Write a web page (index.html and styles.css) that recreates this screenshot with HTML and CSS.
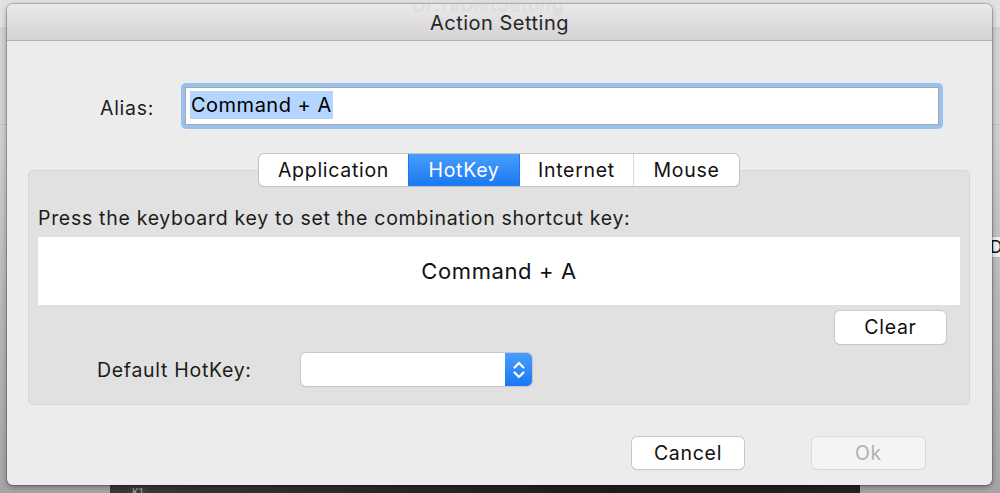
FILE: index.html
```html
<!DOCTYPE html>
<html>
<head>
<meta charset="utf-8">
<link rel="stylesheet" href="styles.css">
</head>
<body>
<div class="desk">
  <div class="back-top"></div>
  <div class="back-btn">Do</div>
  <div class="back-bottom"><span class="back-k">K1</span></div>

  <div class="dialog">
    <div class="titlebar">
      <span class="ghost">Dr.TabletSetting</span>
      <span class="title">Action Setting</span>
    </div>
    <div class="content">
      <div class="alias-row">
        <span class="alias-label">Alias:</span>
        <div class="field-ring">
          <div class="field"><span class="sel">Command + A</span></div>
        </div>
      </div>

      <div class="tabs">
        <div class="tab t-app">Application</div>
        <div class="tab t-hot active">HotKey</div>
        <div class="tab t-net">Internet</div>
        <div class="tab t-mouse">Mouse</div>
      </div>

      <div class="panel">
        <div class="hint">Press the keyboard key to set the combination shortcut key:</div>
        <div class="keybox">Command + A</div>
        <div class="clear-row"><div class="btn btn-clear">Clear</div></div>
        <div class="default-row">
          <span class="default-label">Default HotKey:</span>
          <div class="popup">
            <div class="stepper">
              <svg width="16" height="24" viewBox="0 0 16 24">
                <path d="M3.5 9.5 L8 5 L12.5 9.5" fill="none" stroke="#fff" stroke-width="2.2" stroke-linecap="round" stroke-linejoin="round"/>
                <path d="M3.5 14.5 L8 19 L12.5 14.5" fill="none" stroke="#fff" stroke-width="2.2" stroke-linecap="round" stroke-linejoin="round"/>
              </svg>
            </div>
          </div>
        </div>
      </div>

      <div class="actions">
        <div class="btn btn-cancel">Cancel</div>
        <div class="btn btn-ok disabled">Ok</div>
      </div>
    </div>
  </div>
</div>
</body>
</html>
```

FILE: styles.css
```css
* { box-sizing: border-box; }
html, body { margin: 0; padding: 0; }
body {
  width: 1000px;
  height: 493px;
  overflow: hidden;
  font-family: "Inter", "Liberation Sans", sans-serif;
  color: #1a1a1a;
}
.desk {
  position: relative;
  width: 1000px;
  height: 493px;
  background: linear-gradient(to bottom, #e2e2e2 0, #e2e2e2 27px, #c9c9c9 28px, #d4d4d4 29px, #d2d2d2 120px, #b9b9b9 300px, #a6a6a6 493px);
  overflow: hidden;
}
.back-top {
  position: absolute;
  left: 0; top: 124px;
  width: 1000px; height: 1px;
  background: #c4c4c4;
}
.back-btn {
  position: absolute;
  left: 985px; top: 236px;
  width: 40px; height: 22px;
  background: #f2f2f2;
  border: 1px solid #bdbdbd;
  border-radius: 4px;
  font-size: 17px;
  line-height: 20px;
  padding-left: 4px;
  color: #111;
}
.back-bottom {
  position: absolute;
  left: 110px; top: 484px;
  width: 750px; height: 12px;
  background: linear-gradient(to right, #3a3a3a 0, #2b2b2b 250px, #1e1e1e 500px, #232323 100%);
}
.back-k {
  position: absolute;
  left: 18px; top: 2px;
  font-size: 10px;
  color: #aaa;
  background: #3d3d3d;
  padding: 0 4px;
}
.dialog {
  position: absolute;
  left: 7px; top: 4px;
  width: 985px; height: 481px;
  background: #ececec;
  border-radius: 6px;
  box-shadow: 0 0 0 1px rgba(0,0,0,0.18), 0 2px 6px rgba(0,0,0,0.35);
  overflow: hidden;
  display: flex;
  flex-direction: column;
}
.titlebar {
  position: relative;
  height: 37px;
  flex: none;
  background: linear-gradient(to bottom, #ebe9eb, #d4d2d4);
  border-bottom: 1px solid #b2b2b2;
  display: flex;
  align-items: center;
  justify-content: center;
}
.ghost {
  position: absolute;
  left: 405px; top: -11px;
  font-size: 19px;
  letter-spacing: 0.6px;
  color: rgba(0,0,0,0.08);
  filter: blur(0.8px);
}
.title {
  position: relative;
  font-size: 20px;
  letter-spacing: 0.5px;
  color: #262626;
  padding-top: 1px;
}
.content {
  flex: 1;
  padding: 42px 22px 0 21px;
  display: flex;
  flex-direction: column;
  font-size: 19.5px;
  letter-spacing: 0.7px;
}
.alias-row {
  display: flex;
  align-items: center;
  height: 46px;
}
.alias-label {
  width: 126px;
  text-align: right;
  margin-right: 27px;
  color: #1c1c1c;
  padding-top: 3px;
}
.field-ring {
  width: 762px;
  height: 46px;
  padding: 4px;
  background: #98c1f1;
  border-radius: 5px;
}
.field {
  height: 38px;
  background: #fff;
  border: 1px solid #a8a8a8;
  padding: 3px 0 0 4px;
}
.sel {
  display: inline-block;
  background: #b4d6fe;
  height: 28px;
  line-height: 29px;
  font-size: 20px;
  letter-spacing: 0.5px;
  padding: 0 1px;
  color: #000;
}
.tabs {
  align-self: center;
  margin-top: 25px;
  display: flex;
  height: 32px;
  background: #fff;
  border-radius: 5px;
  box-shadow: 0 0 0 1px #c3c3c3, 0 1px 1px rgba(0,0,0,0.18);
  position: relative;
  z-index: 2;
}
.tab {
  display: flex;
  align-items: center;
  justify-content: center;
  color: #111;
  border-left: 1px solid #d8d8d8;
  padding-bottom: 1px;
}
.tab:first-child { border-left: none; border-radius: 5px 0 0 5px; }
.tab:last-child { border-radius: 0 5px 5px 0; }
.t-app { width: 149px; }
.t-hot { width: 111px; }
.t-net { width: 114px; }
.t-mouse { width: 106px; }
.tab.active {
  background: linear-gradient(to bottom, #4a9dfc, #1878f3);
  color: #fff;
  border-left-color: #1878f3;
}
.tab.active + .tab { border-left-color: #1878f3; }
.panel {
  margin-top: -16px;
  height: 235px;
  background: #e1e1e1;
  border: 1px solid #d6d6d6;
  border-radius: 5px;
  padding: 35px 9px 18px 9px;
  display: flex;
  flex-direction: column;
}
.hint {
  line-height: 24px;
  height: 24px;
  color: #1c1c1c;
  margin-bottom: 7px;
}
.keybox {
  height: 68px;
  background: #fff;
  display: flex;
  align-items: center;
  justify-content: center;
  font-size: 22px;
  letter-spacing: 0.6px;
  color: #111;
}
.clear-row {
  display: flex;
  justify-content: flex-end;
  margin-top: 6px;
  padding-right: 14px;
}
.btn {
  display: flex;
  align-items: center;
  justify-content: center;
  height: 33px;
  background: #fff;
  border-radius: 5px;
  box-shadow: 0 0 0 1px #c8c8c8, 0 1px 1px rgba(0,0,0,0.2);
  color: #111;
  padding-bottom: 1px;
}
.btn-clear { width: 111px; }
.default-row {
  display: flex;
  align-items: center;
  margin-top: 9px;
  padding-left: 59px;
}
.default-label {
  width: 204px;
  color: #1c1c1c;
}
.popup {
  width: 231px;
  height: 33px;
  background: #fff;
  border-radius: 5px;
  box-shadow: 0 0 0 1px #c8c8c8, 0 1px 1px rgba(0,0,0,0.2);
  display: flex;
  justify-content: flex-end;
  overflow: hidden;
}
.stepper {
  width: 27px;
  height: 33px;
  background: linear-gradient(to bottom, #4a9dfc, #1878f3);
  display: flex;
  align-items: center;
  justify-content: center;
}
.actions {
  display: flex;
  justify-content: flex-end;
  margin-top: 32px;
  padding-right: 45px;
  gap: 68px;
}
.btn-cancel { width: 112px; height: 32px; }
.btn-ok { width: 113px; height: 32px; }
.btn.disabled {
  background: #f4f4f4;
  color: #b2b2b2;
  box-shadow: 0 0 0 1px #dadada, 0 1px 1px rgba(0,0,0,0.06);
}
```
